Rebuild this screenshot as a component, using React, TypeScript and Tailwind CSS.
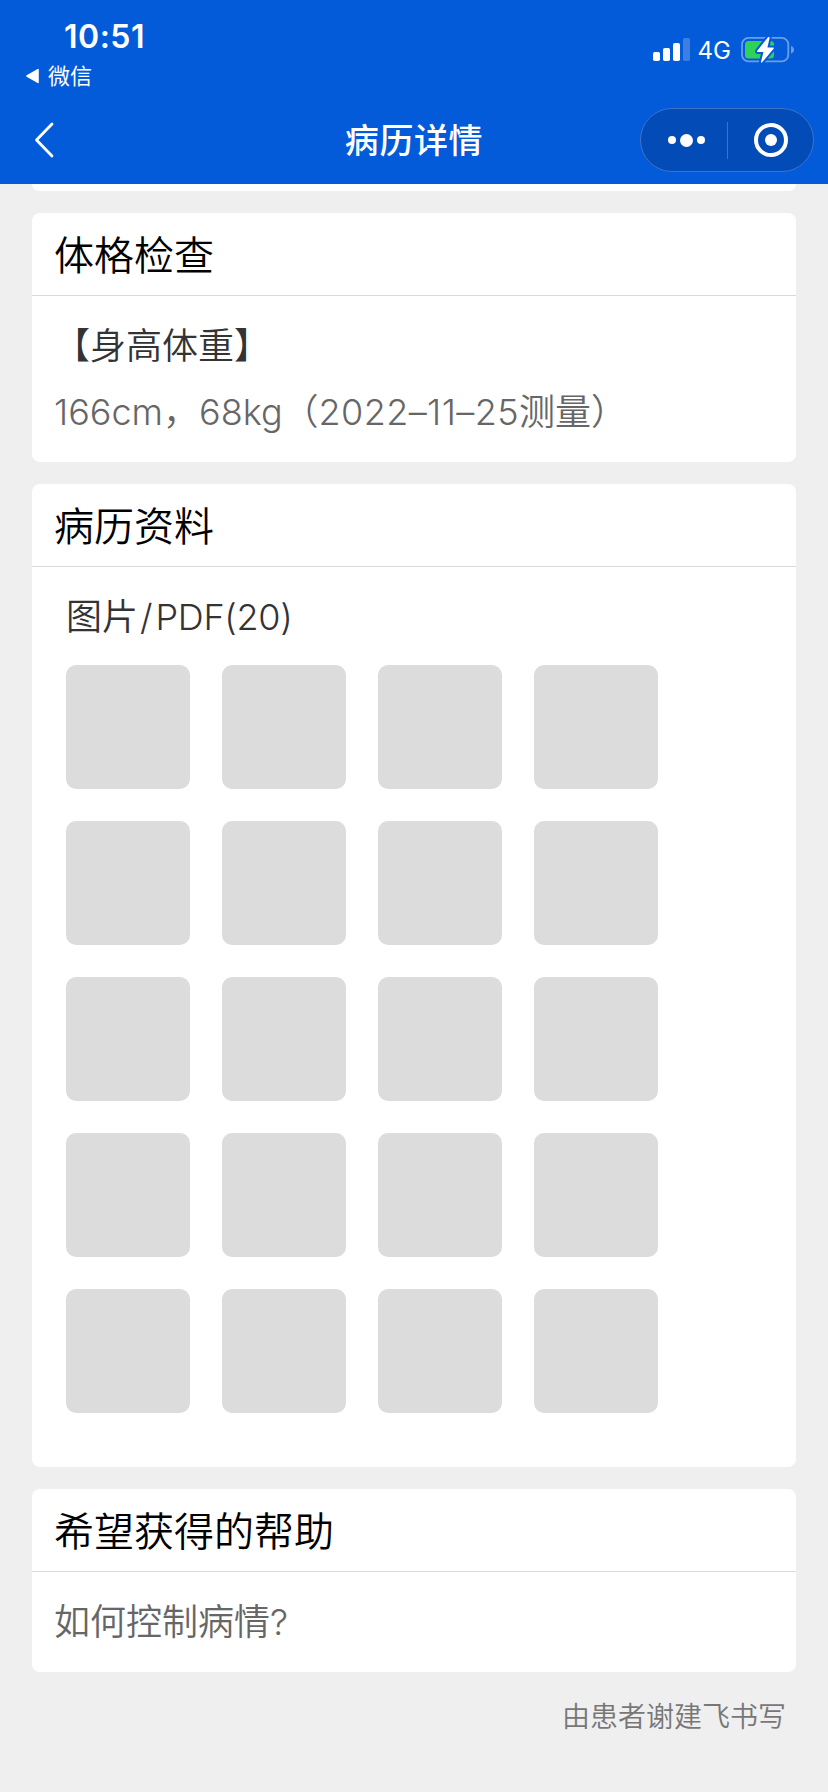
import type { ReactNode } from "react";

function SignalIcon() {
  return (
    <svg width="38" height="24" viewBox="0 0 38 24" fill="#fff">
      <rect x="0" y="14" width="7" height="9" rx="1.8" />
      <rect x="10" y="10" width="7" height="13" rx="1.8" />
      <rect x="20" y="5" width="7" height="18" rx="1.8" />
      <rect x="30" y="0" width="7" height="23" rx="1.8" opacity="0.22" />
    </svg>
  );
}

function BatteryIcon() {
  return (
    <svg width="55" height="28" viewBox="0 0 55 28" fill="none">
      <rect x="2" y="1.900" width="46.300" height="23.400" rx="6.500" stroke="#6b9de9" strokeWidth="1.800" />
      <path d="M51 10v7.500c1.800-.6 3-2 3-3.750s-1.200-3.150-3-3.750z" fill="#6b9de9" />
      <rect x="5" y="5" width="29" height="17.500" rx="3.500" fill="#30d158" />
      <path
        d="M27.800 1.500 17.200 14.800c-.5.7-.2 1.200.5 1.200h5.800l-2.500 9.700c-.2 1 .6 1.300 1.200.5L33.600 12.700c.5-.7.200-1.200-.5-1.200h-5.700l2.200-9.500c.2-1-1.100-1.300-1.800-.5z"
        fill="#fff"
        stroke="#045bd9"
        strokeWidth="4"
        strokeLinejoin="round"
        paintOrder="stroke"
      />
    </svg>
  );
}

function Header() {
  return (
    <header className="h-[184px] bg-[#045bd9] text-white">
      <div className="flex h-[96px] justify-between">
        <div className="flex flex-col pl-[25px] pt-[17px]">
          <div className="pl-[39px] text-[32px] leading-[40px] font-[560] tracking-[0.5px]">10:51</div>
          <div className="mt-[3px] flex h-[32px] items-center gap-[8px]">
            <svg width="15" height="16" viewBox="0 0 15 16">
              <path d="M13 1.600v12.800L2 8z" fill="#fff" stroke="#fff" strokeWidth="1.600" strokeLinejoin="round" />
            </svg>
            <span className="text-[22px] leading-[32px]">微信</span>
          </div>
        </div>
        <div className="mt-[36px] flex h-[28px] items-center pr-[33px]">
          <SignalIcon />
          <span className="ml-[7px] mr-[9px] pt-px text-[24px] leading-[28px]">4G</span>
          <BatteryIcon />
        </div>
      </div>
      <div className="grid h-[88px] grid-cols-[1fr_auto_1fr] items-center">
        <div className="pl-[34px]">
          <svg width="20" height="36" viewBox="0 0 20 36" fill="none">
            <path d="M18 2 2.500 18 18 34" stroke="#fff" strokeWidth="2.800" strokeLinecap="round" strokeLinejoin="round" />
          </svg>
        </div>
        <h1 className="pt-[2px] text-[34px] leading-[48px] font-medium tracking-[0.6px]">病历详情</h1>
        <div className="flex justify-end pr-[14px]">
          <div className="flex h-[64px] w-[174px] items-center rounded-full border border-[#3b73cb] bg-[#034bb6]">
            <div className="flex flex-1 items-center justify-center gap-[4px] pl-[4px]">
              <span className="size-[8px] rounded-full bg-white" />
              <span className="size-[13px] rounded-full bg-white" />
              <span className="size-[8px] rounded-full bg-white" />
            </div>
            <div className="h-[37px] w-px bg-[#3b73cb]" />
            <div className="flex w-[85px] justify-center">
              <div className="flex size-[34px] items-center justify-center rounded-full border-4 border-white">
                <span className="size-[12px] rounded-full bg-white" />
              </div>
            </div>
          </div>
        </div>
      </div>
    </header>
  );
}

function Card({ title, children }: { title: string; children: ReactNode }) {
  return (
    <section className="rounded-[8px] bg-white">
      <h2 className="h-[83px] border-b border-[#d9d9d9] pl-[22px] pt-[2px] text-[40px] leading-[82px] font-[350] text-black">
        {title}
      </h2>
      {children}
    </section>
  );
}

const attachments = Array.from({ length: 20 }, (_, i) => i);

export default function App() {
  return (
    <div className="min-h-[1792px] w-[828px] bg-[#efefef] font-['Inter','Noto_Sans_CJK_SC',sans-serif]">
      <Header />
      <main className="flex flex-col gap-[22px] px-[32px]">
        <div className="h-[7px] rounded-b-[8px] bg-white" />
        <Card title="体格检查">
          <div className="h-[166px] pl-[22px] pt-[17px] text-[36px] leading-[66px] font-[350]">
            <p className="text-[#333]">【身高体重】</p>
            <p className="text-[#666]">
              166cm，68kg（<span className="tracking-[0.4px]">2022–11–25</span>测量）
            </p>
          </div>
        </Card>
        <Card title="病历资料">
          <div className="h-[900px] pl-[34px] pt-[17px]">
            <p className="text-[36px] leading-[66px] font-[350] text-[#333]">
              图片<span className="pl-[2px] pr-[3px]">/</span>
              <span className="tracking-[-0.3px]">PDF(20)</span>
            </p>
            <div className="mt-[15px] grid grid-cols-[repeat(4,124px)] gap-[32px]">
              {attachments.map((i) => (
                <div key={i} className="h-[124px] rounded-[10px] bg-[#dcdcdc]" />
              ))}
            </div>
          </div>
        </Card>
        <Card title="希望获得的帮助">
          <p className="h-[100px] pl-[22px] pt-[17px] text-[36px] leading-[66px] font-[350] text-[#666]">如何控制病情?</p>
        </Card>
      </main>
      <p className="mt-[23px] pr-[42px] text-right text-[28px] leading-[44px] font-[350] text-[#777]">由患者谢建飞书写</p>
    </div>
  );
}
